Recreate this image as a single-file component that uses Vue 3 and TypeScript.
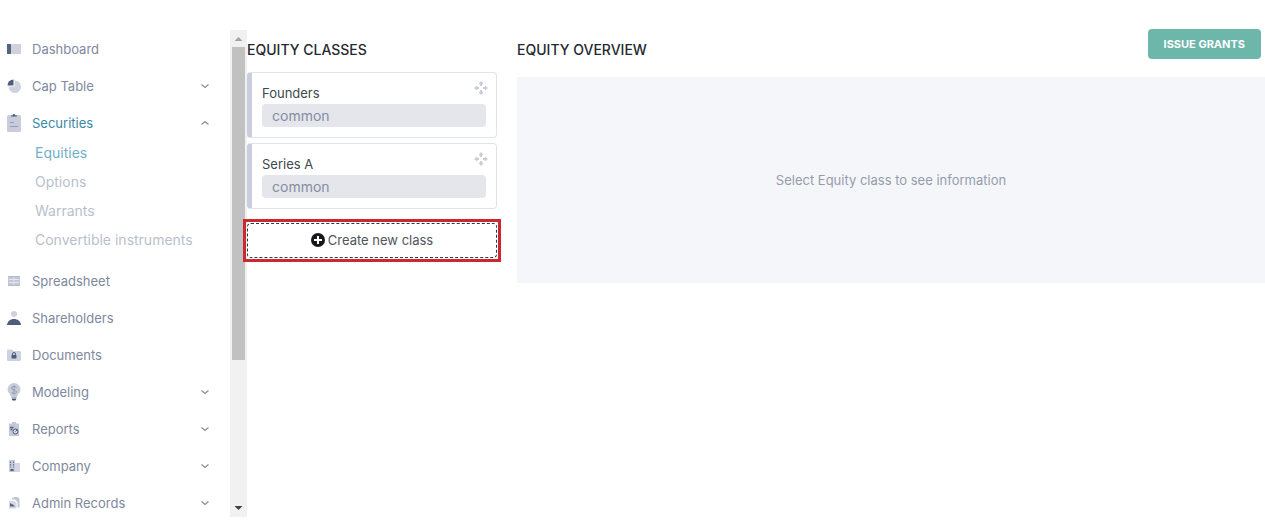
<script setup lang="ts">
import { ref } from 'vue'

interface NavItem {
  label: string
  icon: string
  children?: string[]
}

const upper: NavItem[] = [
  { label: 'Dashboard', icon: 'dashboard' },
  { label: 'Cap Table', icon: 'pie', children: [] },
  { label: 'Securities', icon: 'clipboard', children: ['Equities', 'Options', 'Warrants', 'Convertible instruments'] },
]
const lower: NavItem[] = [
  { label: 'Spreadsheet', icon: 'sheet' },
  { label: 'Shareholders', icon: 'person' },
  { label: 'Documents', icon: 'folder' },
  { label: 'Modeling', icon: 'bulb', children: [] },
  { label: 'Reports', icon: 'report', children: [] },
  { label: 'Company', icon: 'building', children: [] },
  { label: 'Admin Records', icon: 'records', children: [] },
]
const groups = [upper, lower]
const open = ref('Securities')
const activeChild = ref('Equities')
const classes = [
  { name: 'Founders', type: 'common' },
  { name: 'Series A', type: 'common' },
]
function toggle(item: NavItem) {
  if (item.children) open.value = open.value === item.label ? '' : item.label
}
</script>

<template>
  <div class="layout">
    <aside class="sidebar">
      <nav class="nav">
        <ul v-for="(group, g) in groups" :key="g" class="group">
          <li v-for="item in group" :key="item.label">
            <a href="#" class="row" :class="{ current: item.label === open }" @click.prevent="toggle(item)">
              <svg class="icon" viewBox="0 0 16 20" aria-hidden="true">
                <g v-if="item.icon === 'dashboard'">
                  <rect x="1" y="5" width="4" height="10" rx="1" fill="#56637f" />
                  <rect x="5" y="5" width="10" height="10" rx="1" fill="#cfd1de" />
                  <rect x="1" y="5" width="4" height="10" rx="1" fill="#56637f" />
                </g>
                <g v-else-if="item.icon === 'pie'">
                  <path d="M8.500 4.500V10.500H2.500A6.300 6.300 0 1 0 8.500 4.500Z" fill="#cfd3df" />
                  <path d="M7.500 3.500V9.500H1.500A6 6 0 0 1 7.500 3.500Z" fill="#4e5d7c" />
                </g>
                <g v-else-if="item.icon === 'clipboard'">
                  <rect x="1" y="2" width="14" height="17" rx="1.500" fill="#c9ccda" />
                  <path d="M5 3.500V2.500H6.500A1.500 1.500 0 0 1 9.500 2.500H11V3.500Z" fill="#4e5d7c" />
                  <path d="M4 9.500h4M4 13.500h8" stroke="#939db7" />
                </g>
                <g v-else-if="item.icon === 'sheet'">
                  <rect x="2" y="5" width="12" height="10" fill="#c4c8d6" />
                  <path d="M3 8.500h10M3 11.500h10M8 6.500v7.500" stroke="#e3e6ee" />
                  <path d="M2 5.500h12M2 14.500h12" stroke="#b3b9ca" />
                </g>
                <g v-else-if="item.icon === 'person'">
                  <circle cx="8" cy="6" r="3" fill="#cfd1dc" />
                  <path d="M1 17C1.500 13 4.500 11 8 11S14.500 13 15 17Z" fill="#4e5d7c" />
                </g>
                <g v-else-if="item.icon === 'folder'">
                  <path d="M1 5.500Q1 4.500 2 4.500H6L7.500 6H14Q15 6 15 7V14.500Q15 16 14 16H2Q1 16 1 15Z" fill="#ccd2df" />
                  <path d="M6.500 10V9A1.500 1.500 0 0 1 9.500 9V10" fill="none" stroke="#4e5d7c" />
                  <rect x="5.500" y="10" width="5" height="3.500" rx="0.500" fill="#4e5d7c" />
                </g>
                <g v-else-if="item.icon === 'bulb'">
                  <path d="M8 1A6.500 6.500 0 0 0 1.500 7.500C1.500 10.500 4.500 12 5 15H11C11.500 12 14.500 10.500 14.500 7.500A6.500 6.500 0 0 0 8 1Z" fill="#c6cdd9" />
                  <path d="M10.500 5.500C9.500 4 5.500 4 5.500 6.200S10.500 8 10.500 10S6.500 12 5.500 10M8 3.500V12.500" fill="none" stroke="#909bb3" />
                  <path d="M5.500 15.500h5" stroke="#aab2c3" />
                  <path d="M5.500 16.500H10.500L9.500 18.500H6.500Z" fill="#4b5263" />
                </g>
                <g v-else-if="item.icon === 'report'">
                  <path d="M3 4.500H6V3H10V4.500H13V17H3Z" fill="#c5c8d9" />
                  <path d="M4 8.500h3.500M4.500 10.500h2" stroke="#59647f" stroke-width="1.500" />
                  <circle cx="9.500" cy="12.500" r="2.500" fill="#d7d9e5" stroke="#4e5d7c" />
                  <path d="M9.500 12.500l2-2" stroke="#4e5d7c" />
                </g>
                <g v-else-if="item.icon === 'building'">
                  <rect x="3" y="4" width="6" height="12" fill="#c6cbd9" />
                  <rect x="9" y="7" width="5" height="9" fill="#d6d5e5" />
                  <path d="M4.500 5.500v6M7.500 5.500v6" stroke="#6b7590" stroke-dasharray="1.500 1" />
                  <rect x="4.500" y="13" width="3" height="2" fill="#4e5d7c" />
                </g>
                <g v-else>
                  <path d="M6 5.500Q7 4 8.500 4H11.500Q13.500 4.500 13.500 6.500V14.500H11.500V9L9 6.500H6Z" fill="#c2c7d8" />
                  <path d="M3 8H8.500L10.500 10V15.500H3Z" fill="#d5d7e3" />
                  <path d="M4 13.500V10L5.500 11L7 11.500L9 13.500Z" fill="#59647f" />
                </g>
              </svg>
              <span class="label">{{ item.label }}</span>
              <svg v-if="item.children" class="chevron" viewBox="0 0 10 10" aria-hidden="true">
                <path :d="item.label === open ? 'M1.500 6.500L5 3.500L8.500 6.500' : 'M1.500 3.500L5 6.500L8.500 3.500'" fill="none" stroke="#858d9b" stroke-width="1.200" />
              </svg>
            </a>
            <ul v-if="item.label === open && item.children" class="sub">
              <li v-for="child in item.children" :key="child">
                <a href="#" :class="{ active: child === activeChild }" @click.prevent="activeChild = child">{{ child }}</a>
              </li>
            </ul>
          </li>
        </ul>
      </nav>
      <div class="scrollbar" aria-hidden="true">
        <svg viewBox="0 0 17 17"><path d="M4.500 11L8.500 7L12.500 11Z" fill="#a3a3a3" /></svg>
        <div class="track"><div class="thumb"></div></div>
        <svg viewBox="0 0 17 17"><path d="M4.500 6L8.500 10L12.500 6Z" fill="#404040" /></svg>
      </div>
    </aside>

    <section class="classes">
      <h2>EQUITY CLASSES</h2>
      <article v-for="c in classes" :key="c.name" class="card">
        <div class="card-head">
          <span>{{ c.name }}</span>
          <svg class="move" viewBox="0 0 14 14" aria-hidden="true">
            <path d="M7 0L9.500 3L8 3.500V5H6V3.500L4.500 3ZM7 14L4.500 11L6 10.500V9H8V10.500L9.500 11ZM0 7L3 4.500L3.500 6H5V8H3.500L3 9.500ZM14 7L11 9.500L10.500 8H9V6H10.500L11 4.500Z" fill="#c9cdd5" />
          </svg>
        </div>
        <div class="type">{{ c.type }}</div>
      </article>
      <div class="highlight">
        <button type="button" class="create">
          <svg viewBox="0 0 14 14" aria-hidden="true">
            <circle cx="7" cy="7" r="7" fill="#15191e" />
            <path d="M7 3V11M3 7H11" stroke="#fff" stroke-width="2" />
          </svg>
          <span>Create new class</span>
        </button>
      </div>
    </section>

    <main class="overview">
      <header>
        <h2>EQUITY OVERVIEW</h2>
        <button type="button" class="issue">ISSUE GRANTS</button>
      </header>
      <div class="empty">Select Equity class to see information</div>
    </main>
  </div>
</template>

<style>
body {
  margin: 0;
  background: #fff;
}
</style>

<style scoped>
.layout {
  display: flex;
  font-family: Inter, "Liberation Sans", sans-serif;
  font-size: 13px;
  color: #41474d;
}
ul {
  list-style: none;
  margin: 0;
  padding: 0;
}
a {
  text-decoration: none;
}
button {
  font-family: inherit;
  cursor: pointer;
}
.sidebar {
  display: flex;
  flex: 0 0 247px;
  height: calc(100vh - 41px);
  margin-top: 30px;
  overflow: hidden;
}
.nav {
  flex: 1;
}
.group + .group {
  margin-top: 8px;
}
.row {
  display: flex;
  align-items: center;
  height: 37px;
  padding: 0 20px 0 6px;
  color: #7e889e;
}
.row.current {
  color: #3a89a6;
}
.icon {
  width: 16px;
  height: 20px;
  margin-right: 10px;
}
.label {
  flex: 1;
}
.chevron {
  width: 10px;
  height: 10px;
}
.sub {
  margin-top: -3px;
  font-size: 14px;
}
.sub a {
  display: block;
  padding-left: 35px;
  line-height: 29px;
  color: #b9bfcc;
}
.sub a.active {
  color: #6fb1ca;
}
.scrollbar {
  display: flex;
  flex-direction: column;
  width: 17px;
  background: #f1f1f1;
}
.scrollbar svg {
  width: 17px;
  height: 17px;
}
.track {
  flex: 1;
  padding: 0 2px;
}
.thumb {
  height: 69%;
  background: #c1c1c1;
}
h2 {
  margin: 0;
  font-size: 14px;
  line-height: 20px;
  font-weight: 500;
  color: #24292f;
}
.classes {
  flex: 0 0 250px;
  padding-top: 40px;
}
.classes h2 {
  margin-bottom: 12px;
}
.card {
  box-sizing: border-box;
  margin-bottom: 5px;
  padding: 10px;
  border: 1px solid #e0e3e9;
  border-left: 5px solid #c8cedb;
  border-radius: 4px;
}
.card-head {
  display: flex;
  justify-content: space-between;
  margin-bottom: 1px;
  line-height: 20px;
}
.move {
  width: 14px;
  height: 14px;
  margin: -2px -2px 0 0;
}
.type {
  padding: 0 10px;
  border-radius: 4px;
  background: #e4e6ec;
  color: #858da2;
  font-size: 14px;
  line-height: 23px;
}
.highlight {
  margin: 10px -4px 0;
  padding: 1px;
  border: 3px solid #cb2931;
  position: relative;
}
.create {
  display: flex;
  align-items: center;
  justify-content: center;
  gap: 3px;
  width: 100%;
  height: 35px;
  padding: 0 0 2px;
  border: 1px dashed #34383d;
  border-radius: 4px;
  background: #fff;
  color: #50555b;
  font-size: 13px;
}
.create svg {
  width: 14px;
  height: 14px;
}
.overview {
  flex: 1;
  margin-left: 20px;
  padding-top: 29px;
}
.overview header {
  display: flex;
  justify-content: space-between;
  align-items: flex-start;
  height: 48px;
  padding-right: 4px;
}
.overview h2 {
  margin-top: 11px;
}
.issue {
  height: 30px;
  padding: 0 16px;
  border: 0;
  border-radius: 4px;
  background: #6cb6aa;
  color: #fff;
  font-size: 11px;
  font-weight: 700;
}
.empty {
  display: flex;
  align-items: center;
  justify-content: center;
  min-height: 206px;
  background: #f5f6fa;
  color: #959cac;
  font-size: 13px;
}
</style>
